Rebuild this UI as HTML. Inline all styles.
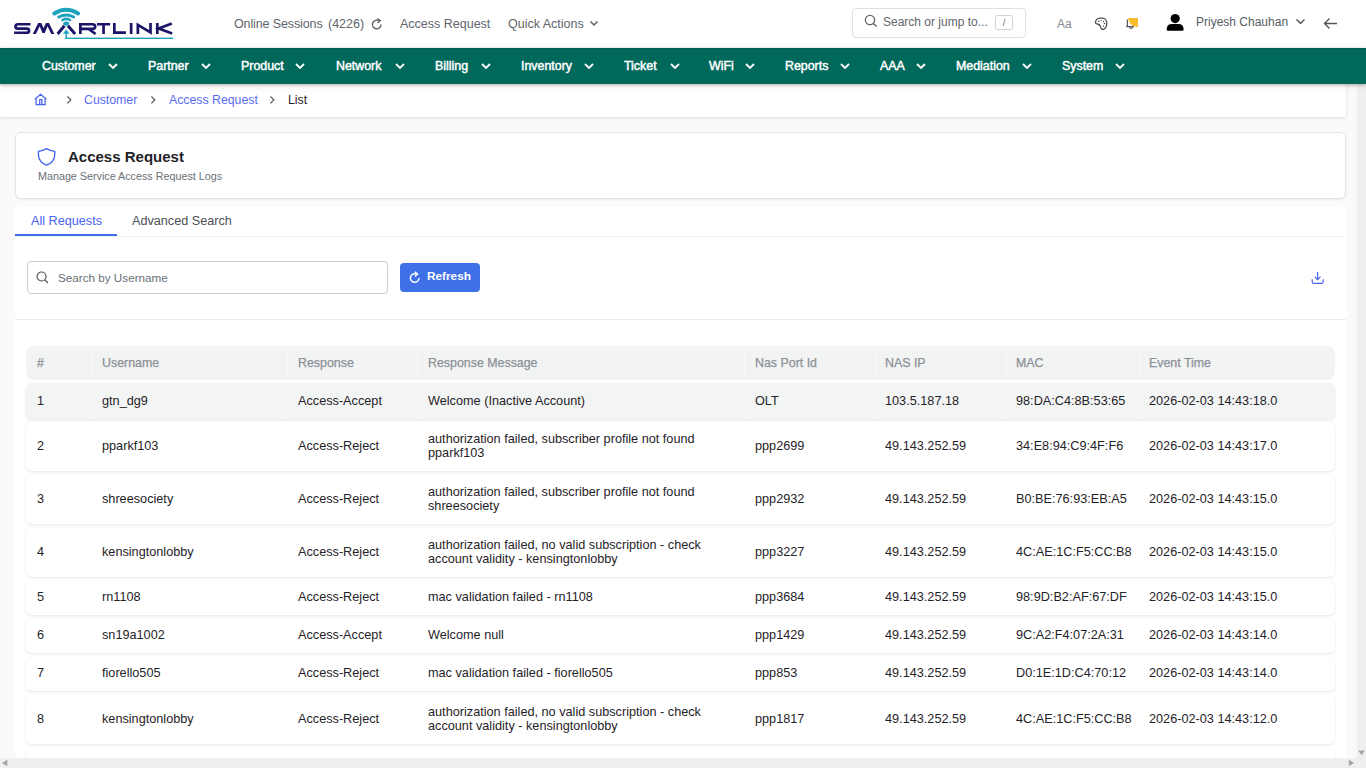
<!DOCTYPE html>
<html><head><meta charset="utf-8">
<style>
*{box-sizing:border-box;margin:0;padding:0}
html,body{width:1366px;height:768px;overflow:hidden;background:#fff;font-family:"Liberation Sans",sans-serif;color:#1f2328}
.abs{position:absolute;white-space:nowrap}
#hdr{position:absolute;left:0;top:0;width:1366px;height:48px;background:#fff}
.hl{font-size:12.5px;line-height:13px;color:#60656b}
#nav{position:absolute;left:0;top:48px;width:1366px;height:36px;background:#00695c;box-shadow:inset 0 1px 0 rgba(0,0,0,.12),0 1px 3px rgba(0,0,0,.28),0 2px 9px rgba(0,0,0,.08);z-index:3}
.ni{position:absolute;top:12px;font-size:12.4px;line-height:12px;font-weight:normal;color:#fff;-webkit-text-stroke:0.45px #fff}
.chev{position:absolute;top:15px;width:10px;height:6px}
#main{position:absolute;left:0;top:84px;width:1357px;height:674px;background:#fafafa;overflow:hidden}
#vsb{position:absolute;left:1357px;top:84px;width:9px;height:674px;background:#efefef}
#hsb{position:absolute;left:0;top:758px;width:1366px;height:10px;background:#efefef}
#bc{position:absolute;left:0;top:0;width:1346px;height:33px;background:#fff;box-shadow:0 1px 3px rgba(0,0,0,.12)}
.bcl{position:absolute;top:10px;font-size:12.3px;line-height:13px;color:#5a6cf0}
#card{position:absolute;left:15px;top:48px;width:1331px;height:67px;background:#fff;border:1px solid #e5e5e5;border-radius:6px;box-shadow:0 1px 2px rgba(0,0,0,.05)}
#panel{position:absolute;left:15px;top:122px;width:1331px;height:600px;background:#fff}
.tab{position:absolute;top:9px;font-size:12.65px;line-height:13px}
.th{position:absolute;left:11px;top:262px;width:1309px;height:34px;background:#f2f3f3;border-radius:8px}
.row{position:absolute;left:11px;width:1309px;background:#fff;border-radius:6px;box-shadow:0 1px 3px rgba(0,0,0,.10)}
.row .c{padding-bottom:2px}
.row.hov .c{padding-bottom:0}
.c{position:absolute;top:0;height:100%;display:flex;align-items:center;padding-left:11px;font-size:12.7px;line-height:14px;white-space:nowrap}
.th .c{color:#8c9197;font-size:12.4px;-webkit-text-stroke:0.25px #8c9197}
.hov{background:#f3f4f4}
.sep{position:absolute;top:0;width:1px;height:100%;background:#f7f8f8}
</style></head><body>
<div id="hdr">
  <svg class="abs" style="left:0;top:0" width="180" height="48" viewBox="0 0 180 48">
    <g fill="none" stroke="#1ea3bf" stroke-linecap="round">
      <path d="M54.3 13.5 Q66.2 6 78.1 13.5" stroke-width="4"/>
      <path d="M58.8 17 Q66.2 13 73.6 17" stroke-width="3"/>
      <path d="M62.5 20 Q66.2 17.8 69.9 20" stroke-width="2.6"/>
    </g>
    <g fill="#1ea3bf">
      <ellipse cx="66.2" cy="23.6" rx="3" ry="2.1"/>
      <path d="M62.8 33.8 L66.2 29.4 L69.6 33.8 Z"/>
      <rect x="65.4" y="33" width="1.5" height="6"/>
      <rect x="65.4" y="37.6" width="107.8" height="1.4"/>
    </g>
    <g fill="none" stroke="#1c1466" stroke-width="2.7" stroke-linejoin="miter">
      <path d="M30.5 24.25 H18 Q15.5 24.25 15.5 26.4 Q15.5 28.6 18 28.6 H26.5 Q29.1 28.6 29.1 30.7 Q29.1 32.75 26.5 32.75 H14.1"/>
      <path d="M57.6 34 L64.4 25.8 M68 25.8 L75.1 34" stroke-width="3"/>
      <path d="M80.35 34 V24.25 H92.4 Q95.2 24.25 95.2 26.6 Q95.2 28.95 92.4 28.95 H80.35 M88.5 28.95 L95.6 34"/>
      <path d="M97 24.25 H110.1 M103.55 24.25 V34"/>
      <path d="M114.35 23 V32.7 H125.9"/>
      <path d="M131.15 23 V34"/>
      <path d="M137.85 34 V24.8 L150.5 32.4 V23"/>
      <path d="M157.3 23 V34 M171.8 23.5 L158.6 28.5 L172.2 33.6"/>
    </g>
    <path d="M32.8 33.9 L38.2 22.9 L41.3 22.9 L43.6 28.2 L45.9 22.9 L49 22.9 L54.3 33.9 L51.3 33.9 L47.5 26.3 L44.8 33 L42.4 33 L39.7 26.3 L35.9 33.9 Z" fill="#1c1466"/>
  </svg>
  <div class="abs hl" style="left:234px;top:18px;letter-spacing:-0.12px">Online Sessions</div><div class="abs hl" style="left:328px;top:18px">(4226)</div>
  <svg class="abs" style="left:371px;top:18px" width="12" height="13" viewBox="0 0 12 13"><path d="M10 6.5 A4.3 4.3 0 1 1 7.5 2.6" fill="none" stroke="#5b6066" stroke-width="1.3"/><path d="M6.2 0.6 L9.3 2.6 L6.6 5" fill="none" stroke="#5b6066" stroke-width="1.3"/></svg>
  <div class="abs hl" style="left:400px;top:18px">Access Request</div>
  <div class="abs hl" style="left:508px;top:18px">Quick Actions</div>
  <svg class="abs" style="left:589px;top:20px" width="10" height="7" viewBox="0 0 10 7"><path d="M1.5 1.5 L5 5 L8.5 1.5" fill="none" stroke="#5b6066" stroke-width="1.5"/></svg>
  <div class="abs" style="left:852px;top:8px;width:174px;height:30px;border:1px solid #dcdfe3;border-radius:4px"></div>
  <svg class="abs" style="left:864px;top:14px" width="14" height="14" viewBox="0 0 14 14"><circle cx="6" cy="6" r="4.6" fill="none" stroke="#5b6066" stroke-width="1.3"/><path d="M9.4 9.4 L12.6 12.6" stroke="#5b6066" stroke-width="1.4"/></svg>
  <div class="abs hl" style="left:883px;top:16px;font-size:12px">Search or jump to...</div>
  <div class="abs" style="left:995px;top:15px;width:18px;height:15px;border:1px solid #d0d3d7;border-radius:3px;font-size:9px;line-height:15px;text-align:center;color:#5b6066">/</div>
  <div class="abs" style="left:1057px;top:18px;font-size:12px;line-height:12px;color:#8a8d91">Aa</div>
  <svg class="abs" style="left:1088px;top:12px" width="26" height="22" viewBox="1088 12 26 22"><path d="M1095.5 23 C1095.3 20.5 1097 18.2 1100 18.2 H1102.5 C1105 18.2 1106.8 20.5 1106.8 23.5 C1106.8 27 1104.5 29.5 1102.3 29.5 C1100.8 29.5 1100.8 27.8 1100.5 26.5 C1100 24.8 1098.8 24.3 1097.5 24 C1096.3 23.8 1095.5 23.6 1095.5 23 Z" fill="none" stroke="#4a4f55" stroke-width="1.3"/><g fill="#4a4f55"><ellipse cx="1098.8" cy="21.4" rx="0.9" ry="0.6"/><circle cx="1101.3" cy="20.6" r="0.7"/><circle cx="1103.5" cy="21.4" r="0.75"/><circle cx="1104.5" cy="23.6" r="0.75"/><circle cx="1103.5" cy="26" r="0.7"/></g></svg>
  <svg class="abs" style="left:1118px;top:10px" width="28" height="26" viewBox="1118 10 28 26"><path d="M1127.4 19.5 V25.6 Q1127.3 26.6 1126.2 26.6 H1134" fill="none" stroke="#555a60" stroke-width="1.2"/><path d="M1129.3 27.4 Q1131 29.2 1133 27.4" fill="none" stroke="#555a60" stroke-width="1.2"/><path d="M1128 18 H1138 V27.1 H1136.5 Q1129 25.5 1128 18 Z" fill="#f8bb2a"/></svg>
  <svg class="abs" style="left:1160px;top:8px" width="30" height="28" viewBox="1160 8 30 28"><circle cx="1175.2" cy="18.6" r="4.6" fill="#000"/><path d="M1166.7 29.3 Q1166.7 23.9 1172 23.9 H1178.3 Q1183.6 23.9 1183.6 29.3 Q1183.6 30.8 1182.2 30.8 H1168.1 Q1166.7 30.8 1166.7 29.3 Z" fill="#000"/></svg>
  <div class="abs hl" style="left:1196px;top:16px;font-size:12px;color:#575c62">Priyesh Chauhan</div>
  <svg class="abs" style="left:1295px;top:18px" width="11" height="7" viewBox="0 0 11 7"><path d="M1.5 1.5 L5.5 5.3 L9.5 1.5" fill="none" stroke="#555" stroke-width="1.5"/></svg>
  <svg class="abs" style="left:1323px;top:17px" width="15" height="13" viewBox="0 0 15 13"><path d="M14 6.5 L2 6.5 M6.5 1.5 L1.5 6.5 L6.5 11.5" fill="none" stroke="#555" stroke-width="1.4"/></svg>
</div>

<div id="nav">
  <div class="ni" style="left:42px">Customer</div><svg class="chev" style="left:108px" viewBox="0 0 10 6"><path d="M1 1 L5 5 L9 1" fill="none" stroke="#fff" stroke-width="1.8"/></svg>
  <div class="ni" style="left:148px">Partner</div><svg class="chev" style="left:201px" viewBox="0 0 10 6"><path d="M1 1 L5 5 L9 1" fill="none" stroke="#fff" stroke-width="1.8"/></svg>
  <div class="ni" style="left:241px">Product</div><svg class="chev" style="left:295px" viewBox="0 0 10 6"><path d="M1 1 L5 5 L9 1" fill="none" stroke="#fff" stroke-width="1.8"/></svg>
  <div class="ni" style="left:336px">Network</div><svg class="chev" style="left:395px" viewBox="0 0 10 6"><path d="M1 1 L5 5 L9 1" fill="none" stroke="#fff" stroke-width="1.8"/></svg>
  <div class="ni" style="left:435px">Billing</div><svg class="chev" style="left:481px" viewBox="0 0 10 6"><path d="M1 1 L5 5 L9 1" fill="none" stroke="#fff" stroke-width="1.8"/></svg>
  <div class="ni" style="left:521px">Inventory</div><svg class="chev" style="left:584px" viewBox="0 0 10 6"><path d="M1 1 L5 5 L9 1" fill="none" stroke="#fff" stroke-width="1.8"/></svg>
  <div class="ni" style="left:624px">Ticket</div><svg class="chev" style="left:670px" viewBox="0 0 10 6"><path d="M1 1 L5 5 L9 1" fill="none" stroke="#fff" stroke-width="1.8"/></svg>
  <div class="ni" style="left:709px">WiFi</div><svg class="chev" style="left:745px" viewBox="0 0 10 6"><path d="M1 1 L5 5 L9 1" fill="none" stroke="#fff" stroke-width="1.8"/></svg>
  <div class="ni" style="left:785px">Reports</div><svg class="chev" style="left:840px" viewBox="0 0 10 6"><path d="M1 1 L5 5 L9 1" fill="none" stroke="#fff" stroke-width="1.8"/></svg>
  <div class="ni" style="left:880px">AAA</div><svg class="chev" style="left:916px" viewBox="0 0 10 6"><path d="M1 1 L5 5 L9 1" fill="none" stroke="#fff" stroke-width="1.8"/></svg>
  <div class="ni" style="left:956px">Mediation</div><svg class="chev" style="left:1022px" viewBox="0 0 10 6"><path d="M1 1 L5 5 L9 1" fill="none" stroke="#fff" stroke-width="1.8"/></svg>
  <div class="ni" style="left:1062px">System</div><svg class="chev" style="left:1115px" viewBox="0 0 10 6"><path d="M1 1 L5 5 L9 1" fill="none" stroke="#fff" stroke-width="1.8"/></svg>
</div>

<div id="main">
  <div id="bc">
    <svg class="abs" style="left:28px;top:4px" width="24" height="24" viewBox="28 88 24 24"><path d="M34.8 99.2 L40.6 94.3 L46.4 99.2 M36.1 98.1 V104.6 H45.1 V98.1 M39.7 104.6 V99.6 H41.9 V104.6" fill="none" stroke="#4a63f0" stroke-width="1.25" stroke-linejoin="miter"/></svg>
    <svg class="abs" style="left:65px;top:10px" width="9" height="12" viewBox="65 94 9 12"><path d="M67.4 96.3 L70.8 99.8 L67.4 103.3" fill="none" stroke="#505459" stroke-width="1.2"/></svg>
    <div class="bcl abs" style="left:84px">Customer</div>
    <svg class="abs" style="left:149px;top:10px" width="9" height="12" viewBox="149 94 9 12"><path d="M151.4 96.3 L154.8 99.8 L151.4 103.3" fill="none" stroke="#505459" stroke-width="1.2"/></svg>
    <div class="bcl abs" style="left:169px">Access Request</div>
    <svg class="abs" style="left:268px;top:10px" width="9" height="12" viewBox="268 94 9 12"><path d="M270.4 96.3 L273.8 99.8 L270.4 103.3" fill="none" stroke="#505459" stroke-width="1.2"/></svg>
    <div class="bcl abs" style="left:288px;color:#1f2328">List</div>
  </div>
  <div id="card">
    <svg class="abs" style="left:16px;top:10px" width="30" height="27" viewBox="32 143 30 27"><path d="M46.6 148.7 Q43 150.8 38.4 151.4 L38.5 155.5 Q38.9 162.1 46.6 165.2 Q54.3 162.1 54.7 155.5 L54.8 151.4 Q50.2 150.8 46.6 148.7 Z" fill="none" stroke="#3f63f0" stroke-width="1.35" stroke-linejoin="round"/></svg>
    <div class="abs" style="left:52px;top:16px;font-size:15px;line-height:15px;font-weight:bold;color:#1f2328">Access Request</div>
    <div class="abs" style="left:22px;top:38px;font-size:10.75px;line-height:11px;color:#6b7076">Manage Service Access Request Logs</div>
  </div>
  <div id="panel">
    <div class="tab abs" style="left:16px;color:#4a63f0">All Requests</div>
    <div class="tab abs" style="left:117px;color:#4b5056">Advanced Search</div>
    <div class="abs" style="left:0;top:30px;width:1331px;height:1px;background:#efefef"></div>
    <div class="abs" style="left:0;top:28px;width:102px;height:2px;background:#3f6ee9"></div>
    <div class="abs" style="left:12px;top:55px;width:361px;height:33px;border:1px solid #c9ccd1;border-radius:4px;background:#fff"></div>
    <svg class="abs" style="left:21px;top:65px" width="13" height="13" viewBox="0 0 13 13"><circle cx="5.5" cy="5.5" r="4.5" fill="none" stroke="#555" stroke-width="1.2"/><path d="M8.7 8.7 L12 12" stroke="#555" stroke-width="1.3"/></svg>
    <div class="abs" style="left:43px;top:65px;font-size:11.7px;line-height:13px;color:#6b6f75">Search by Username</div>
    <div class="abs" style="left:385px;top:57px;width:80px;height:29px;background:#4070e8;border-radius:4px"></div>
    <svg class="abs" style="left:394px;top:65px" width="12" height="13" viewBox="0 0 12 13"><path d="M10 7 A4.3 4.3 0 1 1 7.3 3" fill="none" stroke="#fff" stroke-width="1.4"/><path d="M5.8 0.8 L8.6 3 L6 5.4" fill="none" stroke="#fff" stroke-width="1.4"/></svg>
    <div class="abs" style="left:412px;top:64px;font-size:11.8px;line-height:13px;font-weight:bold;color:#fff">Refresh</div>
        <svg class="abs" style="left:1289px;top:58px" width="28" height="26" viewBox="1304 264 28 26"><path d="M1317.6 272 V279.4 M1314.7 276.7 L1317.6 279.6 L1320.5 276.7 M1312.2 279.3 V281.8 Q1312.2 283.3 1313.7 283.3 H1321.7 Q1323.2 283.3 1323.2 281.8 V279.3" fill="none" stroke="#4866f0" stroke-width="1.2"/></svg>
    <div class="abs" style="left:0;top:113px;width:1331px;height:1px;background:#e8eaed"></div>
<!--TABLE-->
<div class="th" style="left:11px;top:140px"><div class="c" style="left:0px;width:65px">#</div><div class="c" style="left:65px;width:196px">Username</div><div class="c" style="left:261px;width:130px">Response</div><div class="c" style="left:391px;width:327px">Response Message</div><div class="c" style="left:718px;width:130px">Nas Port Id</div><div class="c" style="left:848px;width:131px">NAS IP</div><div class="c" style="left:979px;width:133px">MAC</div><div class="c" style="left:1112px;width:197px">Event Time</div><div class="sep" style="left:65px"></div><div class="sep" style="left:261px"></div><div class="sep" style="left:391px"></div><div class="sep" style="left:718px"></div><div class="sep" style="left:849px"></div><div class="sep" style="left:980px"></div><div class="sep" style="left:1113px"></div></div>
<div class="row hov" style="left:11px;top:177px;height:36px"><div class="c" style="left:0px;width:65px">1</div><div class="c" style="left:65px;width:196px">gtn_dg9</div><div class="c" style="left:261px;width:130px">Access-Accept</div><div class="c" style="left:391px;width:327px">Welcome (Inactive Account)</div><div class="c" style="left:718px;width:130px">OLT</div><div class="c" style="left:848px;width:131px">103.5.187.18</div><div class="c" style="left:979px;width:133px">98:DA:C4:8B:53:65</div><div class="c" style="left:1112px;width:197px">2026-02-03 14:43:18.0</div><div class="sep" style="left:65px"></div><div class="sep" style="left:261px"></div><div class="sep" style="left:391px"></div><div class="sep" style="left:718px"></div><div class="sep" style="left:849px"></div><div class="sep" style="left:980px"></div><div class="sep" style="left:1113px"></div></div>
<div class="row" style="left:11px;top:216px;height:49px"><div class="c" style="left:0px;width:65px">2</div><div class="c" style="left:65px;width:196px">pparkf103</div><div class="c" style="left:261px;width:130px">Access-Reject</div><div class="c" style="left:391px;width:327px">authorization failed, subscriber profile not found<br>pparkf103</div><div class="c" style="left:718px;width:130px">ppp2699</div><div class="c" style="left:848px;width:131px">49.143.252.59</div><div class="c" style="left:979px;width:133px">34:E8:94:C9:4F:F6</div><div class="c" style="left:1112px;width:197px">2026-02-03 14:43:17.0</div></div>
<div class="row" style="left:11px;top:269px;height:49px"><div class="c" style="left:0px;width:65px">3</div><div class="c" style="left:65px;width:196px">shreesociety</div><div class="c" style="left:261px;width:130px">Access-Reject</div><div class="c" style="left:391px;width:327px">authorization failed, subscriber profile not found<br>shreesociety</div><div class="c" style="left:718px;width:130px">ppp2932</div><div class="c" style="left:848px;width:131px">49.143.252.59</div><div class="c" style="left:979px;width:133px">B0:BE:76:93:EB:A5</div><div class="c" style="left:1112px;width:197px">2026-02-03 14:43:15.0</div></div>
<div class="row" style="left:11px;top:322px;height:49px"><div class="c" style="left:0px;width:65px">4</div><div class="c" style="left:65px;width:196px">kensingtonlobby</div><div class="c" style="left:261px;width:130px">Access-Reject</div><div class="c" style="left:391px;width:327px">authorization failed, no valid subscription - check<br>account validity - kensingtonlobby</div><div class="c" style="left:718px;width:130px">ppp3227</div><div class="c" style="left:848px;width:131px">49.143.252.59</div><div class="c" style="left:979px;width:133px">4C:AE:1C:F5:CC:B8</div><div class="c" style="left:1112px;width:197px">2026-02-03 14:43:15.0</div></div>
<div class="row" style="left:11px;top:375px;height:34px"><div class="c" style="left:0px;width:65px">5</div><div class="c" style="left:65px;width:196px">rn1108</div><div class="c" style="left:261px;width:130px">Access-Reject</div><div class="c" style="left:391px;width:327px">mac validation failed - rn1108</div><div class="c" style="left:718px;width:130px">ppp3684</div><div class="c" style="left:848px;width:131px">49.143.252.59</div><div class="c" style="left:979px;width:133px">98:9D:B2:AF:67:DF</div><div class="c" style="left:1112px;width:197px">2026-02-03 14:43:15.0</div></div>
<div class="row" style="left:11px;top:413px;height:34px"><div class="c" style="left:0px;width:65px">6</div><div class="c" style="left:65px;width:196px">sn19a1002</div><div class="c" style="left:261px;width:130px">Access-Accept</div><div class="c" style="left:391px;width:327px">Welcome null</div><div class="c" style="left:718px;width:130px">ppp1429</div><div class="c" style="left:848px;width:131px">49.143.252.59</div><div class="c" style="left:979px;width:133px">9C:A2:F4:07:2A:31</div><div class="c" style="left:1112px;width:197px">2026-02-03 14:43:14.0</div></div>
<div class="row" style="left:11px;top:451px;height:34px"><div class="c" style="left:0px;width:65px">7</div><div class="c" style="left:65px;width:196px">fiorello505</div><div class="c" style="left:261px;width:130px">Access-Reject</div><div class="c" style="left:391px;width:327px">mac validation failed - fiorello505</div><div class="c" style="left:718px;width:130px">ppp853</div><div class="c" style="left:848px;width:131px">49.143.252.59</div><div class="c" style="left:979px;width:133px">D0:1E:1D:C4:70:12</div><div class="c" style="left:1112px;width:197px">2026-02-03 14:43:14.0</div></div>
<div class="row" style="left:11px;top:489px;height:49px"><div class="c" style="left:0px;width:65px">8</div><div class="c" style="left:65px;width:196px">kensingtonlobby</div><div class="c" style="left:261px;width:130px">Access-Reject</div><div class="c" style="left:391px;width:327px">authorization failed, no valid subscription - check<br>account validity - kensingtonlobby</div><div class="c" style="left:718px;width:130px">ppp1817</div><div class="c" style="left:848px;width:131px">49.143.252.59</div><div class="c" style="left:979px;width:133px">4C:AE:1C:F5:CC:B8</div><div class="c" style="left:1112px;width:197px">2026-02-03 14:43:12.0</div></div>
<div class="row" style="left:11px;top:542px;height:49px"></div>
<!--/TABLE--><!--/TABLE--><!--/TABLE-->
  </div>
</div>
<div id="vsb"></div>
<div id="hsb"></div>
<svg class="abs" style="left:0;top:0;z-index:5" width="1366" height="768" viewBox="0 0 1366 768"><g fill="#a3a3a3"><path d="M2 763 L7.3 759.8 L7.3 766.2 Z"/><path d="M1354 763 L1348.8 759.8 L1348.8 766.2 Z"/><path d="M1358.3 750.5 L1364.9 750.5 L1361.6 755.2 Z"/></g></svg>
</body></html>
